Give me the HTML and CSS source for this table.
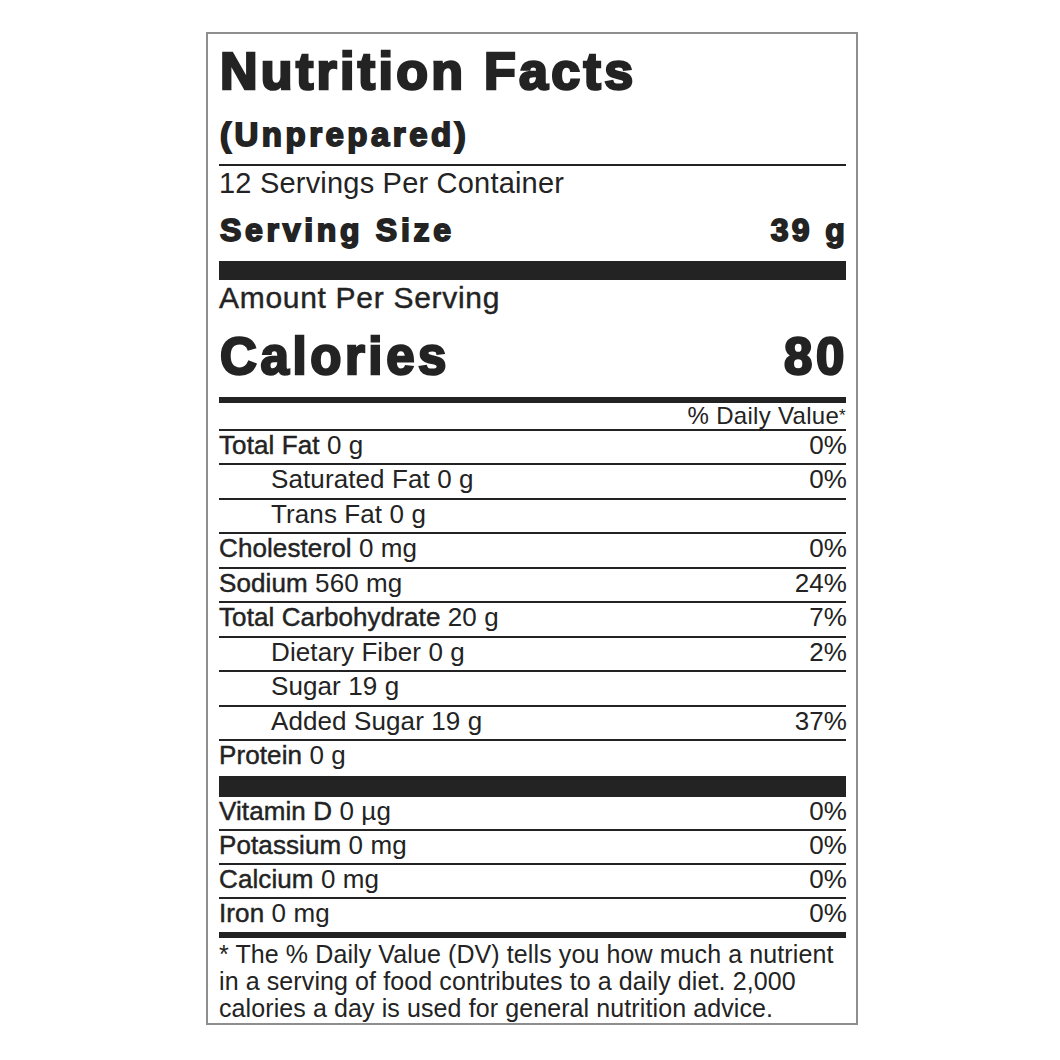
FILE: index.html
```html
<!DOCTYPE html>
<html lang="en">
<head>
<meta charset="utf-8">
<title>Nutrition Facts</title>
<link rel="stylesheet" href="styles.css">
</head>
<body>
<section class="label">
  <h1 class="title">Nutrition Facts</h1>
  <div class="subtitle">(Unprepared)</div>
  <div class="servings">12 Servings Per Container</div>
  <div class="serving-size"><span>Serving Size</span><span>39 g</span></div>
  <div class="bar bar-thick"></div>
  <div class="amount">Amount Per Serving</div>
  <div class="calories"><span>Calories</span><span>80</span></div>
  <div class="bar bar-medium"></div>
  <div class="dv-head">% Daily Value<span class="ast">*</span></div>

  <div class="rows">
    <div class="row"><span><span class="nutrient">Total Fat</span> 0 g</span><span>0%</span></div>
    <div class="row sub"><span>Saturated Fat 0 g</span><span>0%</span></div>
    <div class="row sub"><span>Trans Fat 0 g</span><span></span></div>
    <div class="row"><span><span class="nutrient">Cholesterol</span> 0 mg</span><span>0%</span></div>
    <div class="row"><span><span class="nutrient">Sodium</span> 560 mg</span><span>24%</span></div>
    <div class="row"><span><span class="nutrient">Total Carbohydrate</span> 20 g</span><span>7%</span></div>
    <div class="row sub"><span>Dietary Fiber 0 g</span><span>2%</span></div>
    <div class="row sub"><span>Sugar 19 g</span><span></span></div>
    <div class="row sub"><span>Added Sugar 19 g</span><span>37%</span></div>
    <div class="row row-protein"><span><span class="nutrient">Protein</span> 0 g</span><span></span></div>
  </div>

  <div class="bar bar-vitamins"></div>

  <div class="rows">
    <div class="row row-min"><span><span class="nutrient">Vitamin D</span> 0 µg</span><span>0%</span></div>
    <div class="row row-min"><span><span class="nutrient">Potassium</span> 0 mg</span><span>0%</span></div>
    <div class="row row-min"><span><span class="nutrient">Calcium</span> 0 mg</span><span>0%</span></div>
    <div class="row row-iron"><span><span class="nutrient">Iron</span> 0 mg</span><span>0%</span></div>
  </div>

  <div class="bar bar-medium"></div>

  <p class="footnote">* The % Daily Value (DV) tells you how much a nutrient<br>in a serving of food contributes to a daily diet. 2,000<br>calories a day is used for general nutrition advice.</p>
</section>
</body>
</html>
```

FILE: styles.css
```css
html, body {
  margin: 0;
  padding: 0;
  background: #ffffff;
}

.label {
  box-sizing: border-box;
  width: 652px;
  margin: 32px 0 0 206px;
  padding: 4px 10px 1px 11px;
  border: 2px solid #8e8e8e;
  font-family: "Liberation Sans", Arial, sans-serif;
  color: #232323;
}

.title {
  margin: 0;
  padding-left: 1px;
  font-size: 52px;
  line-height: 66px;
  font-weight: 700;
  letter-spacing: 3.3px;
  -webkit-text-stroke: 2.6px #232323;
  white-space: nowrap;
}

.subtitle {
  padding-top: 2px;
  padding-left: 1px;
  font-size: 33px;
  line-height: 58px;
  font-weight: 700;
  letter-spacing: 3.5px;
  -webkit-text-stroke: 1.8px #232323;
  border-bottom: 2px solid #232323;
}

.servings {
  font-size: 29px;
  line-height: 34px;
  letter-spacing: 0.2px;
}

.serving-size {
  display: flex;
  justify-content: space-between;
  padding-left: 1px;
  font-size: 32px;
  line-height: 61px;
  font-weight: 700;
  letter-spacing: 3.7px;
  -webkit-text-stroke: 1.8px #232323;
}

.serving-size > span:last-child {
  letter-spacing: 3.3px;
  margin-right: -2px;
}

.bar {
  background: #232323;
}

.bar-thick {
  height: 19px;
}

.bar-medium {
  height: 6px;
}

.bar-vitamins {
  height: 21px;
}

.amount {
  font-size: 30px;
  line-height: 36px;
  letter-spacing: 0.7px;
  -webkit-text-stroke: 0.4px #232323;
}

.calories {
  display: flex;
  justify-content: space-between;
  padding-left: 1px;
  font-size: 51px;
  line-height: 81px;
  font-weight: 700;
  letter-spacing: 3.6px;
  -webkit-text-stroke: 2.4px #232323;
}

.calories > span:last-child {
  margin-right: -2px;
}

.dv-head {
  text-align: right;
  font-size: 24px;
  line-height: 26px;
  letter-spacing: 0.3px;
  border-bottom: 2px solid #232323;
}

.ast {
  font-size: 17px;
  vertical-align: 3px;
}

.row {
  box-sizing: border-box;
  display: flex;
  justify-content: space-between;
  height: 34.44px;
  font-size: 26px;
  line-height: 28px;
  letter-spacing: 0.1px;
  border-bottom: 2px solid #232323;
  white-space: nowrap;
}

.row > span:last-child {
  margin-right: -1px;
}

.row.sub > span:first-child {
  padding-left: 52px;
}

.nutrient {
  -webkit-text-stroke: 0.45px #232323;
}

.row-protein {
  height: 35px;
  border-bottom: none;
}

.row-min {
  height: 34px;
}

.row-iron {
  height: 33px;
  border-bottom: none;
}

.footnote {
  margin: 0;
  padding-top: 3px;
  font-size: 25px;
  line-height: 27px;
  letter-spacing: 0.1px;
  white-space: nowrap;
}
```
